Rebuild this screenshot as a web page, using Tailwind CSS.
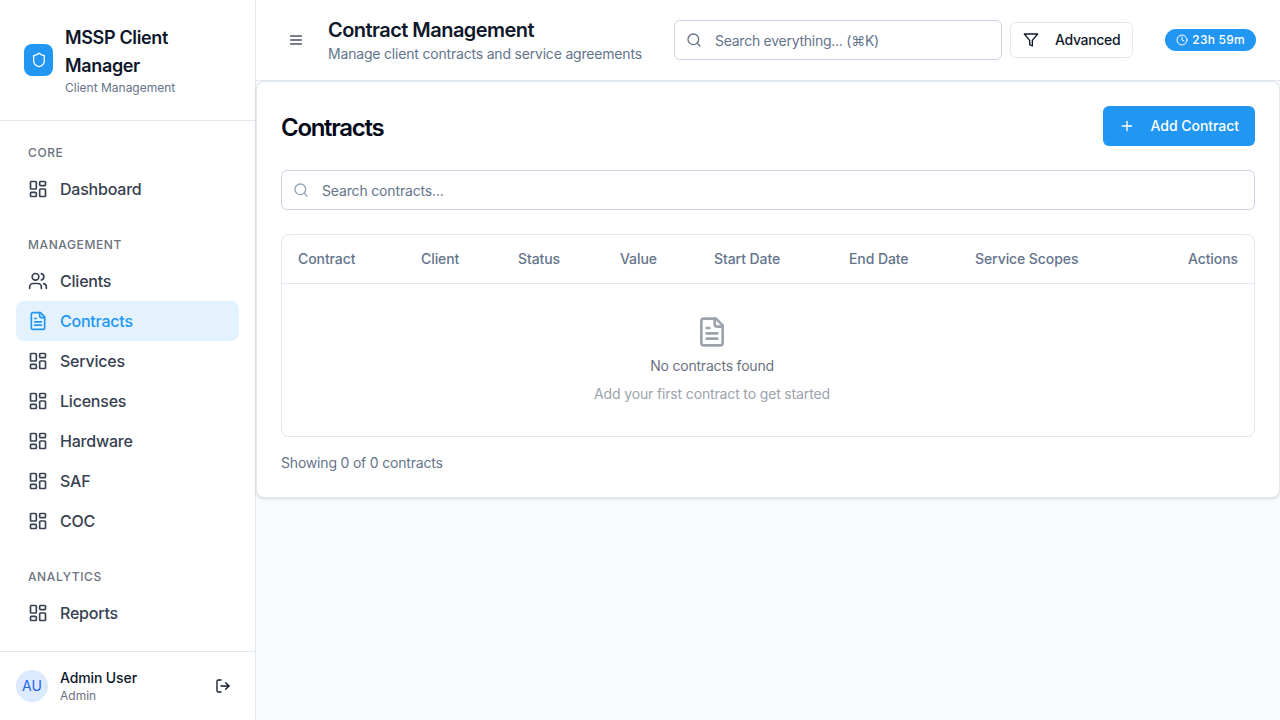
<!DOCTYPE html>
<html lang="en">
<head>
<meta charset="utf-8">
<title>Contract Management</title>
<script src="https://cdn.jsdelivr.net/npm/@tailwindcss/browser@4"></script>
</head>
<body class="font-['Inter',sans-serif] bg-[#f8fafc] overflow-hidden">
<div class="flex w-[1280px] h-[720px]">
  <aside class="w-[256px] shrink-0 h-full bg-white border-r border-[#e2e8f0] flex flex-col">
    <div class="h-[121px] shrink-0 border-b border-[#e2e8f0] px-6 flex items-center gap-3">
      <div class="w-[29px] h-8 shrink-0 rounded-lg bg-[#2196f3] flex items-center justify-center">
        <svg class="w-4 h-4" viewBox="0 0 24 24" fill="none" stroke="white" stroke-width="2" stroke-linecap="round" stroke-linejoin="round"><path d="M20 13c0 5-3.5 7.5-7.66 8.95a1 1 0 0 1-.67-.01C7.5 20.5 4 18 4 13V6a1 1 0 0 1 1-1c2 0 4.5-1.2 6.24-2.72a1.17 1.17 0 0 1 1.52 0C14.51 3.81 17 5 19 5a1 1 0 0 1 1 1z"/></svg>
      </div>
      <div class="w-[160px]">
        <div class="text-lg leading-7 font-semibold tracking-[-0.35px] text-[#0f172a]">MSSP Client Manager</div>
        <div class="text-xs leading-4 text-[#64748b]">Client Management</div>
      </div>
    </div>
    <nav class="flex-1 px-4 pt-6">
      <div class="mb-7">
        <div class="px-3 mb-2 text-xs leading-4 font-medium tracking-wider uppercase text-[#6b7280]">Core</div>
        <a class="flex items-center gap-3 h-10 px-3 rounded-lg text-base font-[450] tracking-[-0.22px] text-[#374151]">
          <svg class="w-5 h-5" viewBox="0 0 24 24" fill="none" stroke="currentColor" stroke-width="2" stroke-linecap="round" stroke-linejoin="round"><rect x="3" y="3" width="7" height="9" rx="1"/><rect x="14" y="3" width="7" height="5" rx="1"/><rect x="14" y="12" width="7" height="9" rx="1"/><rect x="3" y="16" width="7" height="5" rx="1"/></svg>
          Dashboard</a>
      </div>
      <div class="mb-7">
        <div class="px-3 mb-2 text-xs leading-4 font-medium tracking-wider uppercase text-[#6b7280]">Management</div>
        <a class="flex items-center gap-3 h-10 px-3 rounded-lg text-base font-[450] tracking-[-0.22px] text-[#374151]">
          <svg class="w-5 h-5" viewBox="0 0 24 24" fill="none" stroke="currentColor" stroke-width="2" stroke-linecap="round" stroke-linejoin="round"><path d="M16 21v-2a4 4 0 0 0-4-4H6a4 4 0 0 0-4 4v2"/><circle cx="9" cy="7" r="4"/><path d="M22 21v-2a4 4 0 0 0-3-3.87"/><path d="M16 3.13a4 4 0 0 1 0 7.75"/></svg>
          Clients</a>
        <a class="flex items-center gap-3 h-10 px-3 rounded-lg text-base font-[450] tracking-[-0.22px] text-[#2196f3] bg-[#e3f2fd]">
          <svg class="w-5 h-5" viewBox="0 0 24 24" fill="none" stroke="currentColor" stroke-width="2" stroke-linecap="round" stroke-linejoin="round"><path d="M15 2H6a2 2 0 0 0-2 2v16a2 2 0 0 0 2 2h12a2 2 0 0 0 2-2V7Z"/><path d="M14 2v4a2 2 0 0 0 2 2h4"/><path d="M10 9H8"/><path d="M16 13H8"/><path d="M16 17H8"/></svg>
          Contracts</a>
        <a class="flex items-center gap-3 h-10 px-3 rounded-lg text-base font-[450] tracking-[-0.22px] text-[#374151]">
          <svg class="w-5 h-5" viewBox="0 0 24 24" fill="none" stroke="currentColor" stroke-width="2" stroke-linecap="round" stroke-linejoin="round"><rect x="3" y="3" width="7" height="9" rx="1"/><rect x="14" y="3" width="7" height="5" rx="1"/><rect x="14" y="12" width="7" height="9" rx="1"/><rect x="3" y="16" width="7" height="5" rx="1"/></svg>
          Services</a>
        <a class="flex items-center gap-3 h-10 px-3 rounded-lg text-base font-[450] tracking-[-0.22px] text-[#374151]">
          <svg class="w-5 h-5" viewBox="0 0 24 24" fill="none" stroke="currentColor" stroke-width="2" stroke-linecap="round" stroke-linejoin="round"><rect x="3" y="3" width="7" height="9" rx="1"/><rect x="14" y="3" width="7" height="5" rx="1"/><rect x="14" y="12" width="7" height="9" rx="1"/><rect x="3" y="16" width="7" height="5" rx="1"/></svg>
          Licenses</a>
        <a class="flex items-center gap-3 h-10 px-3 rounded-lg text-base font-[450] tracking-[-0.22px] text-[#374151]">
          <svg class="w-5 h-5" viewBox="0 0 24 24" fill="none" stroke="currentColor" stroke-width="2" stroke-linecap="round" stroke-linejoin="round"><rect x="3" y="3" width="7" height="9" rx="1"/><rect x="14" y="3" width="7" height="5" rx="1"/><rect x="14" y="12" width="7" height="9" rx="1"/><rect x="3" y="16" width="7" height="5" rx="1"/></svg>
          Hardware</a>
        <a class="flex items-center gap-3 h-10 px-3 rounded-lg text-base font-[450] tracking-[-0.22px] text-[#374151]">
          <svg class="w-5 h-5" viewBox="0 0 24 24" fill="none" stroke="currentColor" stroke-width="2" stroke-linecap="round" stroke-linejoin="round"><rect x="3" y="3" width="7" height="9" rx="1"/><rect x="14" y="3" width="7" height="5" rx="1"/><rect x="14" y="12" width="7" height="9" rx="1"/><rect x="3" y="16" width="7" height="5" rx="1"/></svg>
          SAF</a>
        <a class="flex items-center gap-3 h-10 px-3 rounded-lg text-base font-[450] tracking-[-0.22px] text-[#374151]">
          <svg class="w-5 h-5" viewBox="0 0 24 24" fill="none" stroke="currentColor" stroke-width="2" stroke-linecap="round" stroke-linejoin="round"><rect x="3" y="3" width="7" height="9" rx="1"/><rect x="14" y="3" width="7" height="5" rx="1"/><rect x="14" y="12" width="7" height="9" rx="1"/><rect x="3" y="16" width="7" height="5" rx="1"/></svg>
          COC</a>
      </div>
      <div>
        <div class="px-3 mb-2 text-xs leading-4 font-medium tracking-wider uppercase text-[#6b7280]">Analytics</div>
        <a class="flex items-center gap-3 h-10 px-3 rounded-lg text-base font-[450] tracking-[-0.22px] text-[#374151]">
          <svg class="w-5 h-5" viewBox="0 0 24 24" fill="none" stroke="currentColor" stroke-width="2" stroke-linecap="round" stroke-linejoin="round"><rect x="3" y="3" width="7" height="9" rx="1"/><rect x="14" y="3" width="7" height="5" rx="1"/><rect x="14" y="12" width="7" height="9" rx="1"/><rect x="3" y="16" width="7" height="5" rx="1"/></svg>
          Reports</a>
      </div>
    </nav>
    <div class="h-[69px] shrink-0 border-t border-[#e2e8f0] px-4 flex items-center gap-3">
      <div class="w-8 h-8 rounded-full bg-[#dbeafe] text-[#2563eb] text-sm flex items-center justify-center">AU</div>
      <div class="flex-1">
        <div class="text-sm leading-5 font-[450] tracking-[-0.12px] text-[#0f172a]">Admin User</div>
        <div class="text-xs leading-4 text-[#6b7280]">Admin</div>
      </div>
      <button class="w-8 h-8 flex items-center justify-center text-[#0f172a]">
        <svg class="w-4 h-4" viewBox="0 0 24 24" fill="none" stroke="currentColor" stroke-width="2" stroke-linecap="round" stroke-linejoin="round"><path d="M9 21H5a2 2 0 0 1-2-2V5a2 2 0 0 1 2-2h4"/><polyline points="16 17 21 12 16 7"/><line x1="21" y1="12" x2="9" y2="12"/></svg>
      </button>
    </div>
  </aside>

  <div class="flex-1 min-w-0 flex flex-col">
    <header class="h-[81px] shrink-0 bg-white border-b border-[#e2e8f0] pl-6 pr-6 flex items-center">
      <button class="w-8 h-8 flex items-center justify-center text-[#475569]">
        <svg class="w-4 h-4" viewBox="0 0 24 24" fill="none" stroke="currentColor" stroke-width="2" stroke-linecap="round" stroke-linejoin="round"><line x1="4" y1="6" x2="20" y2="6"/><line x1="4" y1="12" x2="20" y2="12"/><line x1="4" y1="18" x2="20" y2="18"/></svg>
      </button>
      <div class="ml-4 w-[314px] whitespace-nowrap">
        <div class="text-xl leading-7 font-semibold tracking-[-0.54px] text-[#0f172a]">Contract Management</div>
        <div class="text-sm leading-5 tracking-[-0.19px] text-[#64748b]">Manage client contracts and service agreements</div>
      </div>
      <div class="relative ml-8 w-[328px]">
        <svg class="absolute left-3 top-3 w-4 h-4 text-[#64748b]" viewBox="0 0 24 24" fill="none" stroke="currentColor" stroke-width="2" stroke-linecap="round" stroke-linejoin="round"><circle cx="11" cy="11" r="8"/><path d="m21 21-4.3-4.3"/></svg>
        <input class="w-full h-10 pl-10 pr-3 bg-white border border-[#cbd5e1] rounded-md text-sm tracking-[-0.26px] text-[#0f172a] placeholder:text-[#64748b]" placeholder="Search everything... (⌘K)">
      </div>
      <button class="ml-2 h-9 px-3 bg-white border border-[#e2e8f0] rounded-md flex items-center gap-4 text-sm font-[450] tracking-[-0.33px] text-[#0f172a]">
        <svg class="w-4 h-4" viewBox="0 0 24 24" fill="none" stroke="currentColor" stroke-width="2" stroke-linecap="round" stroke-linejoin="round"><polygon points="22 3 2 3 10 12.46 10 19 14 21 14 12.46 22 3"/></svg>
        Advanced</button>
      <div class="ml-auto h-[22px] px-[11px] rounded-full bg-[#2196f3] text-white text-xs font-medium tracking-[0.25px] flex items-center gap-1">
        <svg class="w-3 h-3" viewBox="0 0 24 24" fill="none" stroke="currentColor" stroke-width="2" stroke-linecap="round" stroke-linejoin="round"><circle cx="12" cy="12" r="10"/><polyline points="12 6 12 12 16 14"/></svg>
        23h 59m</div>
    </header>
    <main class="flex-1">
      <section class="bg-white border border-[#e2e8f0] rounded-lg shadow-sm p-6">
        <div class="flex items-center justify-between h-10">
          <h1 class="text-2xl font-semibold tracking-[-1.3px] mt-1 text-[#020817]">Contracts</h1>
          <button class="h-10 px-4 rounded-md bg-[#2196f3] text-white text-sm font-[450] tracking-[-0.04px] flex items-center gap-4">
            <svg class="w-4 h-4" viewBox="0 0 24 24" fill="none" stroke="currentColor" stroke-width="2" stroke-linecap="round" stroke-linejoin="round"><path d="M5 12h14"/><path d="M12 5v14"/></svg>
            Add Contract</button>
        </div>
        <div class="relative mt-6">
          <svg class="absolute left-3 top-3 w-4 h-4 text-[#94a3b8]" viewBox="0 0 24 24" fill="none" stroke="currentColor" stroke-width="2" stroke-linecap="round" stroke-linejoin="round"><circle cx="11" cy="11" r="8"/><path d="m21 21-4.3-4.3"/></svg>
          <input class="w-full h-10 pl-10 pr-3 bg-white border border-[#cbd5e1] rounded-md text-sm tracking-[-0.16px] text-[#0f172a] placeholder:text-[#64748b]" placeholder="Search contracts...">
        </div>
        <div class="mt-6 border border-[#e2e8f0] rounded-lg overflow-hidden">
          <table class="w-full table-fixed text-sm">
            <thead>
              <tr class="h-[48px] border-b border-[#e2e8f0] text-[#64748b] text-left tracking-[-0.08px]">
                <th class="w-[123px] px-4 font-[450]">Contract</th>
                <th class="w-[97px] px-4 font-[450]">Client</th>
                <th class="w-[102px] px-4 font-[450]">Status</th>
                <th class="w-[94px] px-4 font-[450]">Value</th>
                <th class="w-[135px] px-4 font-[450]">Start Date</th>
                <th class="w-[126px] px-4 font-[450]">End Date</th>
                <th class="px-4 font-[450]">Service Scopes</th>
                <th class="w-[112px] px-4 font-[450] text-right">Actions</th>
              </tr>
            </thead>
            <tbody>
              <tr>
                <td colspan="7" class="h-[153px] text-center align-top pt-8">
                  <svg class="mx-auto w-8 h-8 text-[#9ca3af]" viewBox="0 0 24 24" fill="none" stroke="currentColor" stroke-width="2" stroke-linecap="round" stroke-linejoin="round"><path d="M15 2H6a2 2 0 0 0-2 2v16a2 2 0 0 0 2 2h12a2 2 0 0 0 2-2V7Z"/><path d="M14 2v4a2 2 0 0 0 2 2h4"/><path d="M10 9H8"/><path d="M16 13H8"/><path d="M16 17H8"/></svg>
                  <div class="mt-2 leading-5 tracking-[-0.2px] text-[#6b7280]">No contracts found</div>
                  <div class="mt-2 leading-5 tracking-[-0.15px] text-[#9ca3af]">Add your first contract to get started</div>
                </td>
                <td></td>
              </tr>
            </tbody>
          </table>
        </div>
        <div class="mt-4 text-sm leading-5 tracking-[-0.19px] text-[#64748b]">Showing 0 of 0 contracts</div>
      </section>
    </main>
  </div>
</div>
</body>
</html>
